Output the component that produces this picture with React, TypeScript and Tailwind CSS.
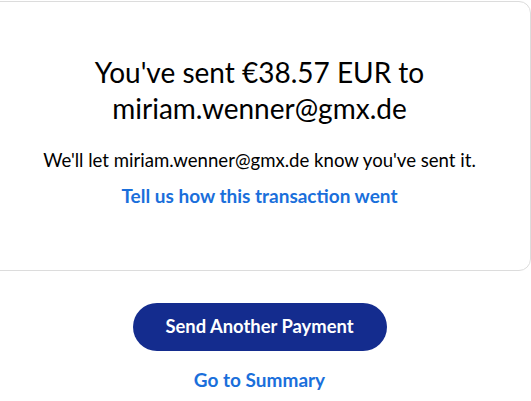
export default function App() {
  return (
    <div className="min-h-screen bg-white font-['Lato',sans-serif] text-black">
      <div className="-ml-[12px] w-[543px] pt-px">
        <section className="flex h-[270px] flex-col items-center rounded-xl border border-[#dcdcdc] bg-white pt-[52px] text-center">
          <h1 className="w-[360px] text-[28px] leading-[36px]">
            You've sent €38.57 EUR to miriam.wenner@gmx.de
          </h1>
          <p className="mt-[22px] text-[18.6px] leading-6">
            We'll let miriam.wenner@gmx.de know you've sent it.
          </p>
          <a href="#" className="mt-[12px] text-[19px] font-bold leading-6 text-[#1a6fdb]">
            Tell us how this transaction went
          </a>
        </section>
        <div className="flex flex-col items-center pt-[32px]">
          <button
            type="button"
            className="h-[48px] w-[254px] rounded-full bg-[#142c8e] text-[18.4px] font-bold text-white"
          >
            Send Another Payment
          </button>
          <a href="#" className="mt-[17px] text-[19px] font-bold leading-6 text-[#1a6fdb]">
            Go to Summary
          </a>
        </div>
      </div>
    </div>
  );
}
